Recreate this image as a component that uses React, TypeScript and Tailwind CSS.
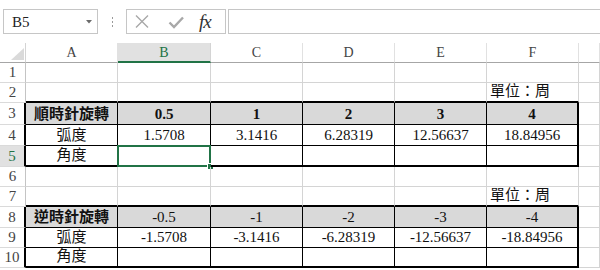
import React from "react";

const COLS = ["A", "B", "C", "D", "E", "F", ""];

type Cell = { t?: string; b?: boolean; left?: boolean };

// row number -> cells A..F
const DATA: Record<number, Cell[]> = {
  2: [{}, {}, {}, {}, {}, { t: "單位：周", left: true }],
  3: [
    { t: "順時針旋轉", b: true },
    { t: "0.5", b: true },
    { t: "1", b: true },
    { t: "2", b: true },
    { t: "3", b: true },
    { t: "4", b: true },
  ],
  4: [{ t: "弧度" }, { t: "1.5708" }, { t: "3.1416" }, { t: "6.28319" }, { t: "12.56637" }, { t: "18.84956" }],
  5: [{ t: "角度" }],
  7: [{}, {}, {}, {}, {}, { t: "單位：周", left: true }],
  8: [{ t: "逆時針旋轉", b: true }, { t: "-0.5" }, { t: "-1" }, { t: "-2" }, { t: "-3" }, { t: "-4" }],
  9: [{ t: "弧度" }, { t: "-1.5708" }, { t: "-3.1416" }, { t: "-6.28319" }, { t: "-12.56637" }, { t: "-18.84956" }],
  10: [{ t: "角度" }],
};

const inTable = (r: number) => (r >= 3 && r <= 5) || (r >= 8 && r <= 10);
const isBottom = (r: number) => r === 5 || r === 10;
const isHeadRow = (r: number) => r === 3 || r === 8;
const aboveTable = (r: number) => r === 2 || r === 7;

function cellClass(r: number, c: number) {
  const base = "relative flex items-end pb-[1px] overflow-visible whitespace-nowrap";
  if (c < 6 && inTable(r)) {
    const right = c === 5 ? "border-r-2 border-r-black" : "border-r border-r-black";
    const bottom = isBottom(r) ? "border-b-2 border-b-black" : "border-b border-b-black";
    const bg = isHeadRow(r) ? "bg-[#d9d9d9]" : "bg-white";
    return `${base} ${right} ${bottom} ${bg}`;
  }
  if (c < 6 && aboveTable(r)) {
    return `${base} border-r border-r-[#d4d4d4] border-b-2 border-b-black`;
  }
  return `${base} border-r border-r-[#d4d4d4] border-b border-b-[#d4d4d4]`;
}

function FormulaBar() {
  return (
    <div className="h-[43px] flex items-start pt-[9px] pl-[3px]">
      <div className="w-[95px] h-[25px] border border-[#c6c6c6] flex items-center justify-between pl-[8px] pr-[5px]">
        <span className="text-[15px] text-[#222] leading-none pt-[2px]">B5</span>
        <svg width="6" height="4" viewBox="0 0 6 4">
          <path d="M0 0 H6 L3 3.5 Z" fill="#6b6b6b" />
        </svg>
      </div>
      <div className="w-[28px] h-[25px] flex flex-col items-center justify-center gap-[2px]">
        <span className="w-[1px] h-[2px] bg-[#9a9a9a]" />
        <span className="w-[1px] h-[2px] bg-[#9a9a9a]" />
        <span className="w-[1px] h-[2px] bg-[#9a9a9a]" />
      </div>
      <div className="w-[100px] h-[25px] border border-[#c6c6c6] flex items-center pl-[7px]">
        <svg width="16" height="15" viewBox="0 0 16 15">
          <path d="M2 1.5 L14 13.5 M14 1.5 L2 13.5" stroke="#a8a8a8" strokeWidth="1.4" fill="none" />
        </svg>
        <svg className="ml-[18px]" width="16" height="14" viewBox="0 0 16 14">
          <path d="M1.5 7.5 L6 12 L15 2.5" stroke="#a8a8a8" strokeWidth="2.4" fill="none" />
        </svg>
        <span className="ml-[15px] font-['Liberation_Serif',serif] italic text-[19px] text-[#333] leading-none tracking-[-1px]">
          fx
        </span>
      </div>
      <div className="ml-[2px] flex-1 h-[25px] border border-[#c6c6c6] border-r-0" />
    </div>
  );
}

export default function App() {
  const rowNums = [1, 2, 3, 4, 5, 6, 7, 8, 9, 10];
  return (
    <div className="w-[600px] h-[270px] overflow-hidden bg-white font-['Liberation_Serif','Noto_Sans_CJK_TC',serif] text-[#111]">
      <FormulaBar />
      <div className="grid grid-cols-[26px_92px_93px_92px_92px_92px_92px_1fr] grid-rows-[20px_20px_20px_22px_21px_21px_20px_20px_21px_20px_20px]">
        {/* corner */}
        <div className="relative border-r border-r-[#d4d4d4] border-b border-b-[#a6a6a6]">
          <svg className="absolute left-[11px] top-[5px]" width="13" height="12" viewBox="0 0 13 12">
            <path d="M13 0 V12 H0 Z" fill="#dadada" />
          </svg>
        </div>
        {COLS.map((l, i) =>
          l === "B" ? (
            <div
              key={i}
              className="flex items-center justify-center bg-[#e1e1e1] border-r border-r-[#d4d4d4] border-b-2 border-b-[#217346] text-[#217346] text-[14px] pt-[1px]"
            >
              {l}
            </div>
          ) : (
            <div
              key={i}
              className="flex items-center justify-center border-r border-r-[#e1e1e1] border-b border-b-[#a6a6a6] text-[#444] text-[14px]"
            >
              {l}
            </div>
          )
        )}
        {rowNums.map((r) => (
          <React.Fragment key={r}>
            <div
              className={`flex items-center justify-center text-[15px] border-b border-b-[#dadada] ${
                inTable(r) ? "border-r-2 border-r-black" : "border-r border-r-[#c4c4c4]"
              } ${r === 5 ? "bg-[#e1e1e1] text-[#217346]" : "text-[#444]"}`}
            >
              {r}
            </div>
            {COLS.map((_, c) => {
              const cell = (DATA[r] || [])[c] || {};
              return (
                <div key={c} className={`${cellClass(r, c)} ${cell.left ? "justify-start pl-[3px]" : "justify-center"}`}>
                  {cell.t && (
                    <span className={`text-[15px] leading-[18px] ${cell.b ? "font-bold" : ""}`}>{cell.t}</span>
                  )}
                  {r === 5 && c === 1 && (
                    <>
                      <div className="absolute -left-[1px] -top-[1px] right-[-1px] bottom-[-2px] border-2 border-[#217346]" />
                      <div className="absolute right-[-4px] bottom-[-5px] w-[7px] h-[7px] bg-[#217346] border border-white" />
                    </>
                  )}
                </div>
              );
            })}
          </React.Fragment>
        ))}
      </div>
    </div>
  );
}
